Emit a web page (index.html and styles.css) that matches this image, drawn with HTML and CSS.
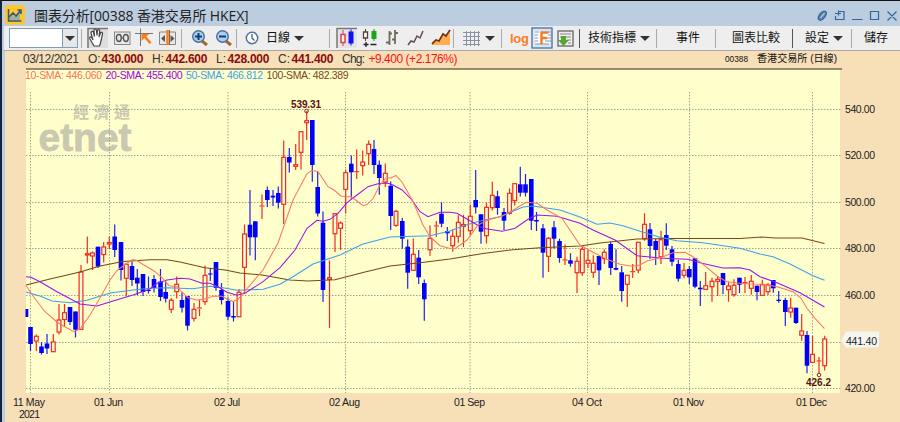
FILE: index.html
```html
<!DOCTYPE html>
<html lang="zh-HK">
<head>
<meta charset="utf-8">
<title>圖表分析[00388 香港交易所 HKEX]</title>
<link rel="stylesheet" href="styles.css">
</head>
<body>
<div class="window">
  <header class="titlebar">
    <svg class="logo" width="20" height="20" viewBox="0 0 20 20"><rect width="20" height="19.5" rx="3" fill="#fdc62f"/><path d="M3.500 13.500l3.500-4 3 2.500 5-5v8.500h-11.500z" fill="#9ab0a0"/><path d="M3.500 4v12h13" fill="none" stroke="#3b5877" stroke-width="1.500"/><path d="M4 12l4-4 3 3 5-6M12.500 5H16v4" fill="none" stroke="#3b5877" stroke-width="1.600"/></svg>
    <h1 class="title">圖表分析[00388 香港交易所 HKEX]</h1>
    <svg class="winbtns" width="82" height="14" viewBox="816 7 82 14" fill="none" stroke="#31669c" stroke-width="1.200"><ellipse cx="822.300" cy="14.700" rx="2.800" ry="5.300" transform="rotate(38 822.300 14.700)" fill="#5b86b0"/><path d="M820.500 17l4-5" stroke="#c5d7e8"/><path d="M839 10.500h5v8h-8.500V15M838.500 9.500v5M835 12.500h6"/><path d="M852 18.500h10.500M870.500 10.500h8v8h-8zM887.500 10.500l9 9M896.500 10.500l-9 9"/></svg>
  </header>
  <nav class="toolbar">
    <div class="combo"><span class="field"></span><span class="drop"><i class="arrow"></i></span></div>
    <i class="sep s1"></i>
    <svg class="icons" width="97" height="22" viewBox="87 27 97 22" fill="none">
      <path d="M88 28h20v20H88z" fill="#dedede"/><path d="M88 48V28.500H108" stroke="#777" stroke-width="1.500"/><path d="M94 46l-4-7c-1-2 1-3 2-1l1 2-2-7c0-2 2-2 2.500-.5l1 4-.5-6c0-2 2-2 2.500 0l.5 5 .5-5c.5-1.500 2.500-1 2.200.500l-.7 6 1.500-4c.7-1.500 2.500-.5 2 1l-2 9-1 3z" fill="#fff" stroke="#444" stroke-width="1.200"/>
      <rect x="114.500" y="32" width="15.500" height="12.500" fill="#e8e8e8" stroke="#888"/><path d="M119 34.500c-4 0-3 7 0 7s3-7 0-7M126 34.500c-4 0-3 7 0 7s3-7 0-7" stroke="#555" stroke-width="1.400"/><path d="M121 38h3" stroke="#555"/>
      <path d="M135 33.500h18M140.500 28.500V46" stroke="#777"/><path d="M141.500 34h7.500l-2.500 2.500 5 6-2 1.500-5-6-3 3z" fill="#ff7c16"/>
      <path d="M159.500 32h16v12.500h-16z" fill="#e8e8e8" stroke="#888"/><path d="M165 35v7l-4-3.500zM170.500 35v7l4-3.500z" fill="#555"/><path d="M167.500 30v15" stroke="#ff7c16" stroke-width="2.500"/><path d="M169.500 30v15" stroke="#765"/>
    </svg>
    <i class="sep s2"></i>
    <svg class="zoomers" width="42" height="18" viewBox="190 29 42 18" fill="none"><path d="M202 41l5 4M226 41l5 4" stroke="#a46b24" stroke-width="3"/><circle cx="198.500" cy="36.500" r="5.800" fill="#a9d1ee" stroke="#4b7096" stroke-width="1.400"/><circle cx="222.500" cy="36.500" r="5.800" fill="#a9d1ee" stroke="#4b7096" stroke-width="1.400"/><path d="M195 36.500h7M198.500 33v7M219 36.500h7" stroke="#123f70" stroke-width="2"/></svg>
    <i class="sep s3"></i>
    <svg class="clock" width="14" height="14" viewBox="0 0 14 14" fill="none"><circle cx="7" cy="7" r="5.700" fill="#fff" stroke="#50729a" stroke-width="1.500"/><path d="M7 3v4l2.500 2.500" stroke="#345f8b" stroke-width="1.300"/></svg>
    <span class="menu period">日線</span><i class="arrow a1"></i>
    <i class="sep s4"></i>
    <svg class="charts" width="116" height="22" viewBox="337 27 116 22" fill="none">
      <path d="M338 28h20v20h-20z" fill="#e3e3ea"/><path d="M338 48V28.500H358" stroke="#777" stroke-width="1.500"/><path d="M344 30v16" stroke="#e43b42"/><path d="M342 34.500h4v8h-4z" fill="#fff" stroke="#e43b42" stroke-width="1.500"/><path d="M352 29.500v16" stroke="#11c"/><path d="M349.500 31.500h5v12h-5z" fill="#11e"/>
      <path d="M366.500 29v12" stroke="#543"/><path d="M364.500 32h4v6h-4z" fill="#fff" stroke="#543" stroke-width="1.300"/><path d="M375 29v12" stroke="#282"/><path d="M372.500 31h5v8h-5z" fill="#1aa719"/><path d="M364.500 44.500h5M367 42v5M371.500 44.500h6" stroke="#222" stroke-width="1.300"/>
      <path d="M390.500 31v14M387 42.500h3M390 33.500h3M396 30v14M393 39.500h3M396 33h3" stroke="#706a59" stroke-width="1.800"/>
      <path d="M409 45l3-4 3 1 3-6 3 2 3-7" stroke="#604b47" stroke-width="1.500"/>
      <path d="M433 45v-3l4-3 3 2 4-5 4 0 3-4v13z" fill="#ffad50"/><path d="M433 44l4-4 3 1 4-7 3 2 4-6" stroke="#753117" stroke-width="1.700"/>
    </svg>
    <i class="sep s5"></i>
    <svg class="grid" width="17" height="17" viewBox="0 0 17 17"><path d="M3.500 1v15M7.500 1v15M11.500 1v15M15.500 1v15M0 2.500h17M0 6.500h17M0 10.500h17M0 14.500h17" stroke="#8793a0"/></svg><i class="arrow a2"></i>
    <i class="sep s6"></i>
    <span class="log">log</span>
    <svg class="fbtns" width="44" height="22" viewBox="532 27 44 22" fill="none"><rect x="533" y="28" width="20" height="20" fill="#d8e7f6" stroke="#4e7ba9" stroke-width="1.400"/><path d="M536 31h15v13h-15z" fill="#fff"/><path d="M536 32h4M536 35h3M536 38h3M536 41h3M536 44h14M549 32h3M549 35h3M546 38h6M546 41h6" stroke="#8a93a0"/><path d="M542.500 44V32.500h7M542 38h6" stroke="#f47a26" stroke-width="2.400"/><rect x="559" y="31" width="15" height="15" fill="#eee" stroke="#777" stroke-width="1.500"/><path d="M561 34h11M561 37h11M568 40h4M569 43h3" stroke="#888"/><path d="M562 36h5v4h3l-5.500 6-5.500-6h3z" fill="#55a82f"/></svg>
    <i class="sep dark s7"></i>
    <span class="menu m1">技術指標</span><i class="arrow a3"></i>
    <i class="sep s8"></i><span class="menu m2">事件</span>
    <i class="sep s9"></i><span class="menu m3">圖表比較</span>
    <i class="sep dark s10"></i><span class="menu m4">設定</span><i class="arrow a4"></i>
    <i class="sep s11"></i><span class="menu m5">儲存</span>
  </nav>
  <main class="panel">
    <svg id="chart" width="895" height="371" viewBox="5 51 895 371" font-family="'Liberation Sans', 'Noto Sans CJK TC', sans-serif">
      <rect x="26" y="69" width="814" height="324" fill="#ffffcc"/>
      <path d="M26 69h816" stroke="#746952" stroke-width="1.400"/>
      <g font-size="12" class="quote">
        <text x="23" y="63" textLength="56">03/12/2021</text>
        <text x="88" y="63">O:</text><text class="val" x="101.500" y="63" textLength="42">430.000</text>
        <text x="152" y="63">H:</text><text class="val" x="165.500" y="63" textLength="42">442.600</text>
        <text x="216" y="63">L:</text><text class="val" x="227.500" y="63" textLength="42">428.000</text>
        <text x="278" y="63">C:</text><text class="val" x="291.500" y="63" textLength="42">441.400</text>
        <text x="342" y="63" textLength="23">Chg:</text><text x="368.500" y="63" fill="#f11" textLength="89">+9.400 (+2.176%)</text>
        <text x="725" y="62" font-size="9.500" textLength="23" lengthAdjust="spacingAndGlyphs" fill="#111">00388</text><text x="757" y="62" font-size="10.500" textLength="80" lengthAdjust="spacingAndGlyphs" fill="#111">香港交易所 (日線)</text>
      </g>
      <g font-size="10.500">
        <text x="25" y="79" fill="#ff6f59" textLength="77">10-SMA: 446.060</text><text x="105.500" y="79" fill="#a000e6" textLength="77">20-SMA: 455.400</text><text x="186" y="79" fill="#3e9ee8" textLength="77">50-SMA: 466.812</text><text x="266.500" y="79" fill="#7d451a" textLength="82">100-SMA: 482.389</text>
      </g>
      <g fill="#c9c9b2"><text x="73" y="117.500" font-size="16" font-weight="700" textLength="57">經濟通</text><text x="38.500" y="151" font-size="38" font-weight="700" textLength="93" lengthAdjust="spacingAndGlyphs" stroke="#c9c9b2" stroke-width=".8">etnet</text></g>
      <g id="grid" stroke="#a3a294" stroke-dasharray="1.500 1.500"></g>
      <g id="candles"></g>
      <g id="averages" fill="none" stroke-width="1.050"></g>
      <g id="labels" font-size="10.500"></g>
      <g fill="none" stroke="#922"><circle cx="306.500" cy="111" r="1.800"/><circle cx="819" cy="375" r="1.800"/></g>
      <g font-size="10" font-weight="700" fill="#5c1010"><text x="291" y="108" textLength="30">539.31</text><text x="806" y="386" textLength="25">426.2</text></g>
      <path d="M841 341l5-9.500h33v16h-33z" fill="#f6f6f1"/><text x="846" y="345" font-size="10.500" fill="#222" textLength="31">441.40</text>
    </svg>
  </main>
</div>
<script src="chart.js"></script>
</body>
</html>
```
FILE: styles.css
```css
* { box-sizing: border-box; }
body { margin: 0; width: 900px; height: 422px; overflow: hidden; background: #bccddf; font-family: "Liberation Sans", "Noto Sans CJK TC", sans-serif; }
.window { height: 422px; border-top: 1px solid #111; border-left: 2px solid #17233a; padding-left: 2px; background: #bccddf; }
.titlebar { height: 25px; display: flex; align-items: center; padding-left: 1px; }
.logo { margin-top: 2px; }
.title { margin: 5px 0 0 9px; width: 216px; font: 400 14px/18px "Open Sans", "Noto Sans CJK TC", sans-serif; color: #222; white-space: nowrap; letter-spacing: -.12px; }
.winbtns { margin: 3px 0 0 566px; }
.toolbar { height: 25px; display: flex; align-items: center; background: #eee; border-bottom: 1px solid #aaa; padding-left: 5px; }
.toolbar > * { flex: none; }
.combo { width: 69px; height: 20px; border: 1px solid #7f9db9; background: #fff; display: flex; }
.field { flex: 1; }
.drop { width: 15px; border-left: 1px solid #7f9db9; background: #e7e7e7; display: flex; align-items: center; justify-content: center; }
.arrow { display: block; width: 0; border: 5px solid transparent; border-top-color: #333; border-bottom: 0; }
.sep { width: 1px; height: 19px; background: #aaa; }
.dark { background: #555; }
.s1 { margin-left: 3px; }
.icons { margin-left: 5px; }
.s2 { margin-left: -3px; }
.zoomers { margin-left: 8px; }
.s3 { margin-left: 4px; }
.clock { margin-left: 8px; }
.menu { font-size: 12px; line-height: 20px; color: #111; white-space: nowrap; font-weight: 400; }
.period { margin-left: 7px; width: 23px; }
.a1 { margin-left: 5px; }
.s4 { margin-left: 25px; }
.charts { margin-left: 6px; }
.s5 { margin-left: 1px; }
.grid { margin-left: 9px; }
.a2 { margin-left: 5px; }
.s6 { margin-left: 6px; }
.log { margin-left: 8px; width: 20px; color: #ff7d22; font-size: 13px; font-weight: 700; letter-spacing: -.3px; }
.fbtns { margin-left: 1px; }
.s7 { margin-left: 4px; }
.m1 { margin-left: 8px; width: 48px; }
.a3 { margin-left: 4px; }
.s8 { margin-left: 6px; }
.m2 { margin-left: 19px; width: 24px; }
.s9 { margin-left: 15px; }
.m3 { margin-left: 16px; width: 48px; }
.s10 { margin-left: 12px; }
.m4 { margin-left: 12px; width: 24px; }
.a4 { margin-left: 4px; }
.s11 { margin-left: 8px; }
.m5 { margin-left: 12px; }
.panel { margin-left: 1px; background: #f7dfb8; height: 371px; }
.panel svg { display: block; }
.quote { fill: #333; }
.val { font-weight: 700; fill: #8b0c0c; }
```
FILE: chart.js
```js
// Each row: x, high, body top, body bottom, low, u = rising / d = falling
const candles = `26 309 309 317 317 d
30.5 327 327 344 351 d
36.3 334.5 336.3 341 351 u
41.5 342 346.5 353 354.5 d
47 334 343.5 348.5 354 d
53.3 334 342 351.7 352 u
59 304 320 332 334.5 u
64.5 304 312.7 319.5 327 u
70 307 307 322 325 d
75.5 311.5 311.5 329.7 337.5 d
81 265 272 329.3 330 u
87.3 236.5 253.7 255 263.5 u
92.5 251.5 253 256 270 u
98 246.7 246.7 266.5 268 d
103.7 242 247 254.5 262.5 u
109.3 236.5 242.5 244 249 u
114.7 224.5 236.5 250 257 d
121 242 242 270 280.5 d
126.3 263.5 264.3 278.3 296.5 u
132 261.5 266 280 286 d
137.3 269 277.7 283.5 295 d
143 274 274 292 296 d
148.5 276.5 290 291 293.5 d
154 275 279 288 292.5 d
160.5 269 281.5 297 301 d
165.7 281.5 292 298.7 302.5 d
171.3 298 300.3 309.3 313 u
176.7 276.5 284.3 291.7 298.5 u
182 292 300 307.7 312.5 d
187.5 296 296 325.7 330.5 d
194 303 309.3 318.3 321.5 u
199.5 300 308 309 316 u
205 265.5 275.3 301.7 305 u
210.3 268 273.5 274.5 281 d
216 262 262 288 290.7 d
221.5 283 290 300 304.5 d
228 297.5 301 316.7 320 d
233.5 301.5 316 317.5 321.5 d
239 289 292.3 316.7 316.7 u
244.5 224.5 234 267.3 293 u
250 190 224.7 237.3 255.5 d
255.3 221.3 221.3 237.3 260.3 d
262 194.5 206 207 219 u
267.3 186.5 190 200 207 d
273 190 195.7 197.5 206 d
278.3 186.5 193 202.7 208.5 d
283.7 140.5 157.3 204.3 224 u
289.3 148 157 162.5 172.5 d
295.7 144 164.7 166.3 170 u
301 131.7 131.7 152.3 169.5 u
306.7 111 120.7 122.7 140 u
312.3 120 120 165 181.7 d
317.7 172 187 213.5 216.5 d
323 211.5 222.7 290 302 d
329.5 260.5 277.7 279.3 328 u
335 213 213.7 233.7 252 u
340.5 221.5 223 228.3 250 u
345.7 169.5 172.7 189.3 213.5 u
351.3 155.5 163.7 172.3 198.5 d
356.7 149.5 171.7 172.3 179 u
362.7 150.5 162 165.7 175.5 u
368.7 140.5 144.3 153.7 165 u
374 140 149 165 174 d
379.3 160.5 164.7 178 194.7 d
385.3 163.5 173.3 182 187 u
390.7 181.5 185.7 216 230 d
396 210 211.3 225.3 227 u
402.3 218 221 238.7 248.7 d
407.7 239.5 246.7 272.7 288.7 d
413.3 238.5 254.3 270.3 270.3 u
418.7 250 257.7 277.3 284 d
424.3 279.5 283 299.3 320.7 d
430 225.5 238.3 249.7 255.7 u
436.3 221 226 226.6 237 u
441.5 202.5 213.7 223.7 227.3 d
447.3 227 231 233.3 241 d
452.7 229.3 236.3 245.7 251.7 u
458.3 215.3 222.3 236.3 242.7 u
463.5 214.7 224.5 226.5 247 u
470.3 204.7 216.3 230.7 235.7 u
475.7 170 200 207.3 213.5 d
481 214.3 214.3 231.7 243.7 d
486.5 202.5 207.3 235.7 243.5 u
492.3 181.7 195.3 207.7 210.5 u
497.5 190.7 196.3 208 214.7 d
504 208 212 220.7 230 d
509.5 188.5 193.3 213.3 214.7 u
514.7 183.7 183.7 200.7 205.5 u
520.3 166.7 184.3 192.7 196.5 d
525.5 174 184.3 192.7 196.5 d
531.3 179 179 220.7 230 d
536.5 212 220 221.5 231 d
543 224 228.3 252.7 277.7 d
548.5 237 238.3 256.3 272 u
554 221 227.3 238.7 248.5 d
559.5 238.7 241 258 262.7 d
565 244.5 260 260.6 265 u
570.5 253.3 260.3 263.7 266.7 d
577 256.7 261.3 272.7 293 u
582.3 246.7 249.3 272.7 275.7 u
588 250 260.3 263.3 268 u
593.3 255.3 263.3 272.3 278 u
599 256 256 270.3 285 d
604.3 249.3 252.3 258.7 264 u
610.7 241.7 244 268 275 d
616 249.3 268 269.7 270.3 d
621.7 266 272.3 291 301.7 d
627.3 275.3 275.3 284.3 307 u
632.7 264 271.7 272.3 278 u
638.3 242.3 242.3 270 273.3 u
644.5 213.3 224.3 238.7 240.7 u
650 223 229.3 246 258.7 d
655.7 239 241 250 265 d
661 230.7 239.7 256.7 264 u
666.3 223.3 235 245.7 250 d
672 246 249.3 261.7 266 d
678.3 260 264 278.7 281.7 d
684 263 270.3 275.3 278.3 u
689.3 266 269 277.3 284 d
695 258.3 258.3 286.7 288.3 d
700.3 281 287.7 289.3 306 d
705.7 272 285.7 289.3 289.3 u
712 277.7 281.3 286.7 301.7 u
717.7 276.3 279.3 281.3 296 u
723 273 273 285 294 d
728.5 281.7 286 289.7 301.7 u
734 279.3 285.3 294.7 296.7 u
739.5 277.7 277.7 284.7 293 d
745 277 282.5 283.1 293 u
751.3 275 281.3 288.3 294.7 u
757 285.7 285.7 292 300.3 d
762.3 279.7 284.7 295.3 296 u
768 283 285 291.7 295 u
773.3 280 280 288.3 292.7 d
778.7 291 299.7 301 302.7 d
785.3 297.7 300 312 326 d
790.7 297.7 308 312 317.7 u
796 307.7 307.7 323 324 d
801.7 314 331 335.3 340.7 u
807 331 335 365.7 373.3 d
812.5 336 354.3 362.3 362.3 u
819 357 361 361.6 373 u
824.7 335.7 339 365.7 370.5 u`;

const averages = {
  '#7d4515': '26,285 50,279 80,272 100,266 123,261.5 150,259.7 167,259.7 180,262 205,267.7 225,270 240,273 262,275 290,280 308,281 335,279.7 363,272.5 390,266 420,262.7 450,259 483,253.5 513,249.7 540,247.7 580,246 600,243 637,239 670,238.5 740,238.5 762,237 775,238 802,238 824.5,243.5',
  '#3a9ff0': '26,292 40,296 52,301 70,302.7 87,300.3 110,293 133,290 150,288.3 167,287.7 193,288.7 210,286.3 223,287.7 237,290.3 263,289.3 280,284.3 293,276.7 313,264 340,255 363,244 390,237 430,235.7 450,231 463,226 480,221 500,216.7 523,207 533,206 560,210 580,217 597,224.3 610,223 623,225.7 640,231.3 660,237.3 677,240.7 703,242.7 740,248.3 760,254 773,256.7 790,264 813,275.7 824.5,280.3',
  '#9c12ea': '26,276.7 31,277.3 40,281.7 57,291.7 80,304 97,306 113,301 133,295 150,289 157,283.3 167,280 180,278.3 190,279 202,283.3 210,283.3 218,286.7 227,292.3 237,295.3 245,293.3 263,281.7 280,267.7 295,250 307,228.3 317,220.3 323,221.3 330,219.3 338,213.3 347,202.7 357,195 368,186.7 378,183.7 387,183 393,185 402,190 412,200 420,211.7 428,216.7 440,212.3 450,212.3 457,213.3 470,220.7 483,228.3 502,231.3 515,228.3 528,219.3 537,215 557,216.3 580,223.3 593,230 615,240 637,255.7 660,258 673,258.7 688,259.3 702,263.3 713,265.7 723,268 740,267.7 750,270 760,276.7 777,282.7 800,292.7 824.5,307',
  '#ff7563': '26,285.5 33,296 45,311.7 57,322 67,328 74,331.7 80,329 90,315 100,298 110,280 117,270.5 125,264.5 132.7,259.5 137,260.5 143,264.5 150,268.5 155,271.7 162,277.7 169,285.7 177,286.7 183,293 188,297.7 197,300 205,299 213,296.3 222,296.3 227,299 233,301.5 238,299.3 245,291 263,270 278,243 293,200 307,173.5 312,170.5 318,171.5 328,186.7 334,190 341,196 346,196.7 351,196.7 357,201 363,205.7 367,204.5 373,198.5 380,185 386,178 391,178 396,175.5 402,182 413,201.5 423,225 430,236.7 440,245.7 450,248.5 455,248.7 467,240 478,225 488,220 503,215.7 515,209 526,202.3 537,203.3 547,210 562,218.3 580,245 593,252.3 607,259.3 620,264.3 632,266.3 640,265 647,261 663,256.7 673,252.7 685,252.3 693,256.7 702,263.3 718,276.7 727,281.7 740,283.3 750,284 763,284.3 777,286.7 793,291.7 801,298.3 807,308.3 815,318.3 824.5,328.7'
};

const put = (id, markup) => { document.getElementById(id).innerHTML = markup; };

const rows = [[109.5, '540.00'], [155.5, '520.00'], [202.5, '500.00'], [248.5, '480.00'], [295.5, '460.00'], [342.5, ''], [388.5, '420.00']];
const months = [[30.5, '11 May', 13, 32], [109.5, '01 Jun', 94, 29], [228, '02 Jul', 214, 26], [345.5, '02 Aug', 329, 31], [470, '01 Sep', 454, 31], [587.5, '04 Oct', 572, 30], [689.5, '01 Nov', 673, 31], [812.5, '01 Dec', 796, 31]];

put('grid', rows.map(r => `<path d="M26 ${r[0]}H842"/>`).join('') + months.map(m => `<path d="M${m[0]} 92V393"/>`).join(''));

put('candles', candles.split('\n').map(line => {
  const p = line.split(' ');
  const [x, high, top, bottom, low] = p.map(Number);
  const h = bottom - top;
  if (p[5] === 'd') {
    const left = Math.max(26, x - 2.3);
    return `<path d="M${x} ${high}V${low}" stroke="#2020ee" stroke-width="1.2"/><rect x="${left}" y="${top}" width="${x + 2.3 - left}" height="${h}" fill="#00f"/>`;
  }
  const wick = `<path d="M${x} ${high}V${top}M${x} ${bottom}V${low}" stroke="#f32a20" stroke-width="1.2"/>`;
  if (h <= 1) return wick + `<path d="M${x - 2.5} ${top}h5" stroke="#f32a20" stroke-width="1.1"/>`;
  return wick + `<rect x="${x - 1.9}" y="${top}" width="3.8" height="${h}" fill="#ffffd8" stroke="#f32a20" stroke-width="1.2"/>`;
}).join(''));

put('averages', Object.entries(averages).map(([color, pts]) => `<polyline points="${pts}" stroke="${color}"/>`).join(''));

put('labels', rows.filter(r => r[1]).map(r => `<text x="845" y="${r[0] + 3.5}" fill="#222" textLength="30">${r[1]}</text>`).join('')
  + months.map(m => `<text x="${m[2]}" y="406" fill="#222" textLength="${m[3]}">${m[1]}</text>`).join('')
  + '<text x="19" y="418" fill="#222" textLength="21">2021</text>');
```
